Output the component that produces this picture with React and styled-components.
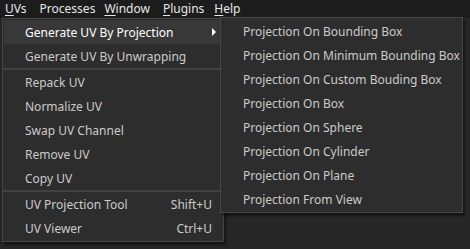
import React from "react";
import styled, { createGlobalStyle } from "styled-components";

const Global = createGlobalStyle`
  html, body { margin: 0; padding: 0; background: #292929; }
  body { font-family: "Noto Sans", "Segoe UI", sans-serif; }
  #root { width: 470px; height: 249px; overflow: hidden; }
`;

const Page = styled.div`
  width: 470px;
  height: 249px;
  display: flex;
  flex-direction: column;
  background: #2a2a2a;
  position: relative;
  overflow: hidden;
`;

const MenuBar = styled.div`
  height: 18px;
  display: flex;
  align-items: center;
  background: #1c1c1c;
  padding-left: 5px;
`;

const BarItem = styled.div`
  font-size: 12px;
  color: #e6e6e6;
  line-height: 18px;
  margin-right: ${(p) => p.$gap}px;
  white-space: nowrap;
  u { text-decoration: underline; text-underline-offset: 2px; }
`;

const Workspace = styled.div`
  flex: 1;
  background: #262626;
`;

const Menu = styled.div`
  position: absolute;
  left: ${(p) => p.$left}px;
  top: ${(p) => p.$top}px;
  width: ${(p) => p.$width}px;
  background: #2d2d2d;
  border: 1px solid #464646;
  padding: 1px 1px;
  box-shadow: 2px 3px 2px rgba(0, 0, 0, 0.45);
  display: flex;
  flex-direction: column;
  z-index: ${(p) => p.$z};
`;

const Item = styled.div`
  height: 24px;
  display: flex;
  align-items: center;
  padding: 0 10px 0 21px;
  font-size: 12px;
  color: ${(p) => (p.$active ? "#ffffff" : "#cbcbcb")};
  background: ${(p) => (p.$active ? "#383838" : "transparent")};
  white-space: nowrap;
`;

const Label = styled.span`
  flex: 1;
`;

const Shortcut = styled.span`
  color: #cbcbcb;
`;

const Separator = styled.div`
  height: 2px;
  background: #414141;
  margin: 0 -1px;
`;

const Arrow = styled.span`
  width: 0;
  height: 0;
  border-top: 4px solid transparent;
  border-bottom: 4px solid transparent;
  border-left: 4px solid #ffffff;
  margin-right: -4px;
`;

const subItems = [
  "Projection On Bounding Box",
  "Projection On Minimum Bounding Box",
  "Projection On Custom Bouding Box",
  "Projection On Box",
  "Projection On Sphere",
  "Projection On Cylinder",
  "Projection On Plane",
  "Projection From View",
];

export default function App() {
  return (
    <>
      <Global />
      <Page>
        <MenuBar>
          <BarItem $gap={13}><u>U</u>Vs</BarItem>
          <BarItem $gap={9}>Processes</BarItem>
          <BarItem $gap={13}><u>W</u>indow</BarItem>
          <BarItem $gap={10}><u>P</u>lugins</BarItem>
          <BarItem $gap={0}><u>H</u>elp</BarItem>
        </MenuBar>
        <Workspace />
        <Menu $left={2} $top={18} $width={218} $z={1}>
          <Item $active>
            <Label>Generate UV By Projection</Label>
            <Arrow />
          </Item>
          <Item>
            <Label>Generate UV By Unwrapping</Label>
          </Item>
          <Separator />
          <Item><Label>Repack UV</Label></Item>
          <Item><Label>Normalize UV</Label></Item>
          <Item><Label>Swap UV Channel</Label></Item>
          <Item><Label>Remove UV</Label></Item>
          <Item><Label>Copy UV</Label></Item>
          <Separator />
          <Item>
            <Label>UV Projection Tool</Label>
            <Shortcut>Shift+U</Shortcut>
          </Item>
          <Item>
            <Label>UV Viewer</Label>
            <Shortcut>Ctrl+U</Shortcut>
          </Item>
        </Menu>
        <Menu $left={220} $top={17} $width={239} $z={2}>
          {subItems.map((s) => (
            <Item key={s}>
              <Label>{s}</Label>
            </Item>
          ))}
        </Menu>
      </Page>
    </>
  );
}
